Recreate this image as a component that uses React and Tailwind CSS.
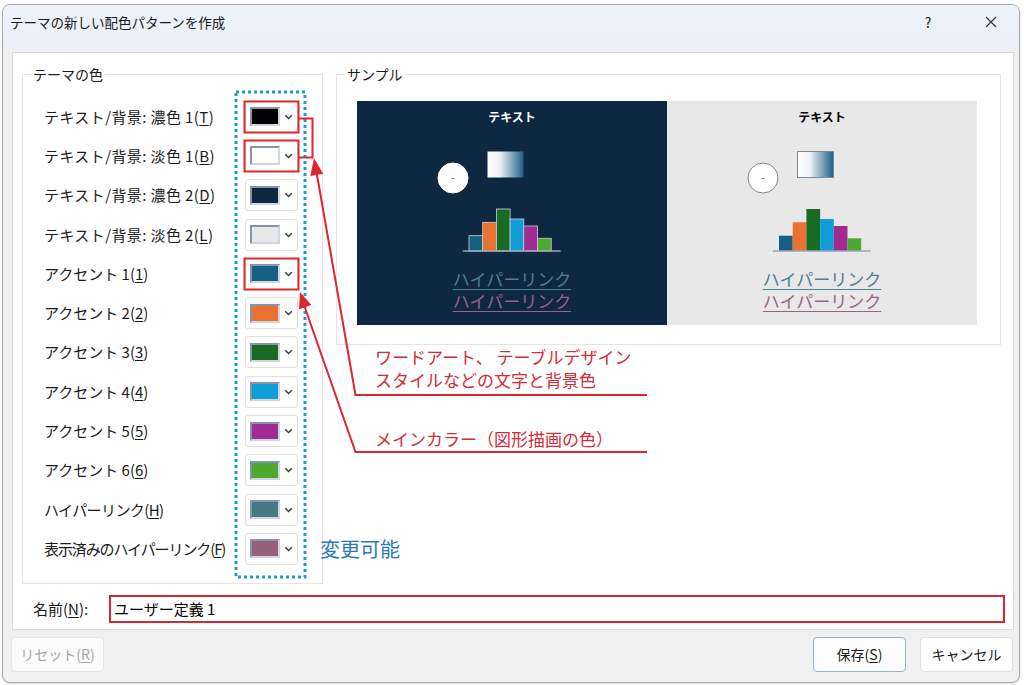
import React from 'react';

const rows = [
  { pre: 'テキスト/背景: 濃色 1(', key: 'T', swatch: 'bg-[#000000]', fit: 'tracking-[0.4px]' },
  { pre: 'テキスト/背景: 淡色 1(', key: 'B', swatch: 'bg-[#ffffff]', fit: 'tracking-[0.4px]' },
  { pre: 'テキスト/背景: 濃色 2(', key: 'D', swatch: 'bg-[#0e2841]', fit: 'tracking-[0.4px]' },
  { pre: 'テキスト/背景: 淡色 2(', key: 'L', swatch: 'bg-[#e8e8e8]', fit: 'tracking-[0.4px]' },
  { pre: 'アクセント 1(', key: '1', swatch: 'bg-[#156082]', fit: '' },
  { pre: 'アクセント 2(', key: '2', swatch: 'bg-[#e97132]', fit: '' },
  { pre: 'アクセント 3(', key: '3', swatch: 'bg-[#196b24]', fit: '' },
  { pre: 'アクセント 4(', key: '4', swatch: 'bg-[#0f9ed5]', fit: '' },
  { pre: 'アクセント 5(', key: '5', swatch: 'bg-[#a02b93]', fit: '' },
  { pre: 'アクセント 6(', key: '6', swatch: 'bg-[#4ea72e]', fit: '' },
  { pre: 'ハイパーリンク(', key: 'H', swatch: 'bg-[#467886]', fit: 'tracking-[-0.6px]' },
  { pre: '表示済みのハイパーリンク(', key: 'F', swatch: 'bg-[#96607d]', fit: 'tracking-[-1.1px]' },
];

// bar chart of the sample preview
const bars = [
  { h: 15.3, c: '#156082' },
  { h: 28.7, c: '#e97132' },
  { h: 42, c: '#196b24' },
  { h: 32, c: '#0f9ed5' },
  { h: 25, c: '#a02b93' },
  { h: 12.7, c: '#4ea72e' },
];

const Chevron = () => (
  <svg width="9" height="6" viewBox="0 0 9 6" className="ml-[4px]">
    <path d="M1.2 1.2 L4.5 4.5 L7.8 1.2" fill="none" stroke="#3a3a3a" strokeWidth="1.4" />
  </svg>
);

const ColorRow = ({ pre, accel, swatch, fit }) => (
  <div className="flex items-center h-[39.3px] ml-[13px]">
    <span className={`w-[201px] whitespace-nowrap text-[15px] leading-[20px] text-[#1b1b1b] ${fit}`}>
      {pre}
      <span className="underline underline-offset-2">{accel}</span>)
    </span>
    <div className="flex items-center w-[53px] h-[32px] pl-[4px] bg-white border border-[#dfdfdf] rounded-[3px]">
      <span
        className={`w-[30px] h-[19px] border-2 border-t-[#8795aa] border-l-[#8795aa] border-r-[#cfd6e0] border-b-[#cfd6e0] ${swatch}`}
      />
      <Chevron />
    </div>
  </div>
);

const SamplePanel = ({ dark }) => {
  const gid = dark ? 'grad-dark' : 'grad-light';
  return (
    <div className={`flex flex-col items-center w-[310px] h-[224px] ${dark ? 'bg-[#0e2841]' : 'bg-[#e8e8e8]'}`}>
      <div className={`mt-[8px] text-[12px] leading-[16px] font-bold ${dark ? 'text-white' : 'text-black'}`}>
        テキスト
      </div>
      <svg width="310" height="128" viewBox="0 0 310 128">
        <defs>
          <linearGradient id={gid} x1="0" y1="0" x2="1" y2="0">
            <stop offset="0" stopColor="#ffffff" />
            <stop offset="0.35" stopColor="#eef1f4" />
            <stop offset="1" stopColor="#1a5e86" />
          </linearGradient>
        </defs>
        <circle cx="96" cy="53" r="15" fill="#ffffff" stroke={dark ? '#ffffff' : '#7a8796'} strokeWidth="1" />
        <line x1="94.5" y1="53.5" x2="97.5" y2="53.5" stroke="#8a8a8a" strokeWidth="1" />
        <rect
          x="130.5"
          y="26.5"
          width="36"
          height="26"
          fill={`url(#${gid})`}
          stroke={dark ? 'none' : '#7d8a99'}
          strokeWidth="1"
        />
        {bars.map((b, i) => (
          <rect
            key={i}
            x={112 + i * 13.7}
            y={126 - b.h}
            width="13.7"
            height={b.h}
            fill={b.c}
            stroke={dark ? '#c9d2dc' : 'none'}
            strokeWidth="0.8"
          />
        ))}
        <line x1="105.7" y1="126" x2="203.7" y2="126" stroke="#9aa6b3" strokeWidth="1.5" />
      </svg>
      <div className="mt-[15px] flex flex-col items-center text-[17px] leading-[22px]">
        <span className="text-[#4f7f8f] underline underline-offset-[3px]">ハイパーリンク</span>
        <span className="text-[#9a6384] underline underline-offset-[3px]">ハイパーリンク</span>
      </div>
    </div>
  );
};

const Annotations = () => (
  <>
    <svg className="absolute left-0 top-0 pointer-events-none" width="1024" height="685" viewBox="0 0 1024 685">
      <rect x="236" y="92" width="69" height="485" fill="none" stroke="#1d9ad8" strokeWidth="3" strokeDasharray="3 3" />
      <g fill="none" stroke="#e0262d" strokeWidth="2">
        <rect x="244.5" y="101.5" width="54" height="31" />
        <rect x="244.5" y="140.5" width="54" height="31" />
        <rect x="244.5" y="258.5" width="54" height="31" />
        <path d="M299 118.5 H312.5 V157.5 H299" />
        <path d="M316.5 172 L355.5 395 H647" />
        <path d="M304 305 L355.5 452 H647" />
      </g>
      <g fill="#e0262d">
        <polygon points="314,158 323.1,173.7 310.3,175.9" />
        <polygon points="300,292 311.4,305 299,309.2" />
      </g>
    </svg>
    <div className="absolute left-[375px] top-[345px] text-[17px] leading-[23px] text-[#d42b38] whitespace-nowrap">
      <div>ワードアート、 テーブルデザイン</div>
      <div>スタイルなどの文字と背景色</div>
    </div>
    <div className="absolute left-[375px] top-[427px] text-[17px] leading-[23px] text-[#d42b38] whitespace-nowrap">
      メインカラー（図形描画の色）
    </div>
    <div className="absolute left-[320px] top-[537px] text-[20px] leading-[24px] text-[#2a7ab9] whitespace-nowrap">
      変更可能
    </div>
  </>
);

export default function App() {
  return (
    <div className="relative w-[1024px] h-[685px] bg-white overflow-hidden pt-[4px] pl-[2px] font-['Noto_Sans_CJK_JP','Noto_Sans',sans-serif] text-[#1b1b1b]">
      <div className="flex flex-col w-[1018px] h-[679px] rounded-[8px] border border-[#a9a9a9] bg-[#f0f0f0] overflow-hidden shadow-[0_1px_3px_rgba(0,0,0,0.15)]">
        {/* title bar */}
        <div className="flex items-start h-[47px] pl-[7px] pt-[7px] bg-gradient-to-b from-[#eef2fb] to-[#eceff4]">
          <span className="text-[13.5px] leading-[20px] text-[#1b1b1b]">テーマの新しい配色パターンを作成</span>
          <span className="ml-auto w-[46px] text-center text-[14px] leading-[20px] text-[#222]">?</span>
          <span className="ml-[17px] mr-[5px] w-[46px] h-[20px] flex items-center justify-center">
            <svg width="12" height="12" viewBox="0 0 12 12">
              <path d="M1 1 L11 11 M11 1 L1 11" stroke="#333" strokeWidth="1.1" />
            </svg>
          </span>
        </div>

        {/* content panel */}
        <div className="ml-[9px] w-[1002px] h-[578px] bg-white border border-[#d9d9d9] pt-[11px] pl-[9px]">
          <div className="flex items-start gap-[13px]">
            <fieldset className="w-[301px] h-[520px] border border-[#e4e4e4] pl-[8px] pt-[13px]">
              <legend className="px-[2px] text-[14px] leading-[20px]">テーマの色</legend>
              {rows.map((r) => (
                <ColorRow key={r.key} pre={r.pre} accel={r.key} swatch={r.swatch} fit={r.fit} />
              ))}
            </fieldset>
            <fieldset className="w-[665px] h-[281px] border border-[#e4e4e4] pl-[8px]">
              <legend className="px-[2px] text-[14px] leading-[20px]">サンプル</legend>
              <div className="flex ml-[12px] mt-[17px]">
                <SamplePanel dark />
                <SamplePanel />
              </div>
            </fieldset>
          </div>

          <div className="flex items-center h-[28px] mt-[11px] pl-[11px]">
            <span className="w-[76px] text-[15px] leading-[20px] whitespace-nowrap">
              名前(<span className="underline underline-offset-2">N</span>):
            </span>
            <div className="flex items-center w-[896px] h-[28px] border-2 border-[#d6282e] pl-[3px] text-[15px] text-black">
              ユーザー定義 1
            </div>
          </div>
        </div>

        {/* footer buttons */}
        <div className="flex items-start mt-[7px] pl-[8px] pr-[6px]">
          <button className="w-[93px] h-[35px] rounded-[4px] border border-[#e6e6e6] bg-[#fbfbfb] text-[14px] text-[#a3a3a3]">
            リセット(<span className="underline underline-offset-2">R</span>)
          </button>
          <button className="ml-auto w-[93px] h-[35px] rounded-[4px] border border-[#8fb2da] bg-[#fdfdfd] text-[14px] text-[#1b1b1b]">
            保存(<span className="underline underline-offset-2">S</span>)
          </button>
          <button className="ml-[14px] w-[93px] h-[35px] rounded-[4px] border border-[#e0e0e0] bg-white text-[14px] text-[#1b1b1b]">
            キャンセル
          </button>
        </div>
      </div>
      <Annotations />
    </div>
  );
}
